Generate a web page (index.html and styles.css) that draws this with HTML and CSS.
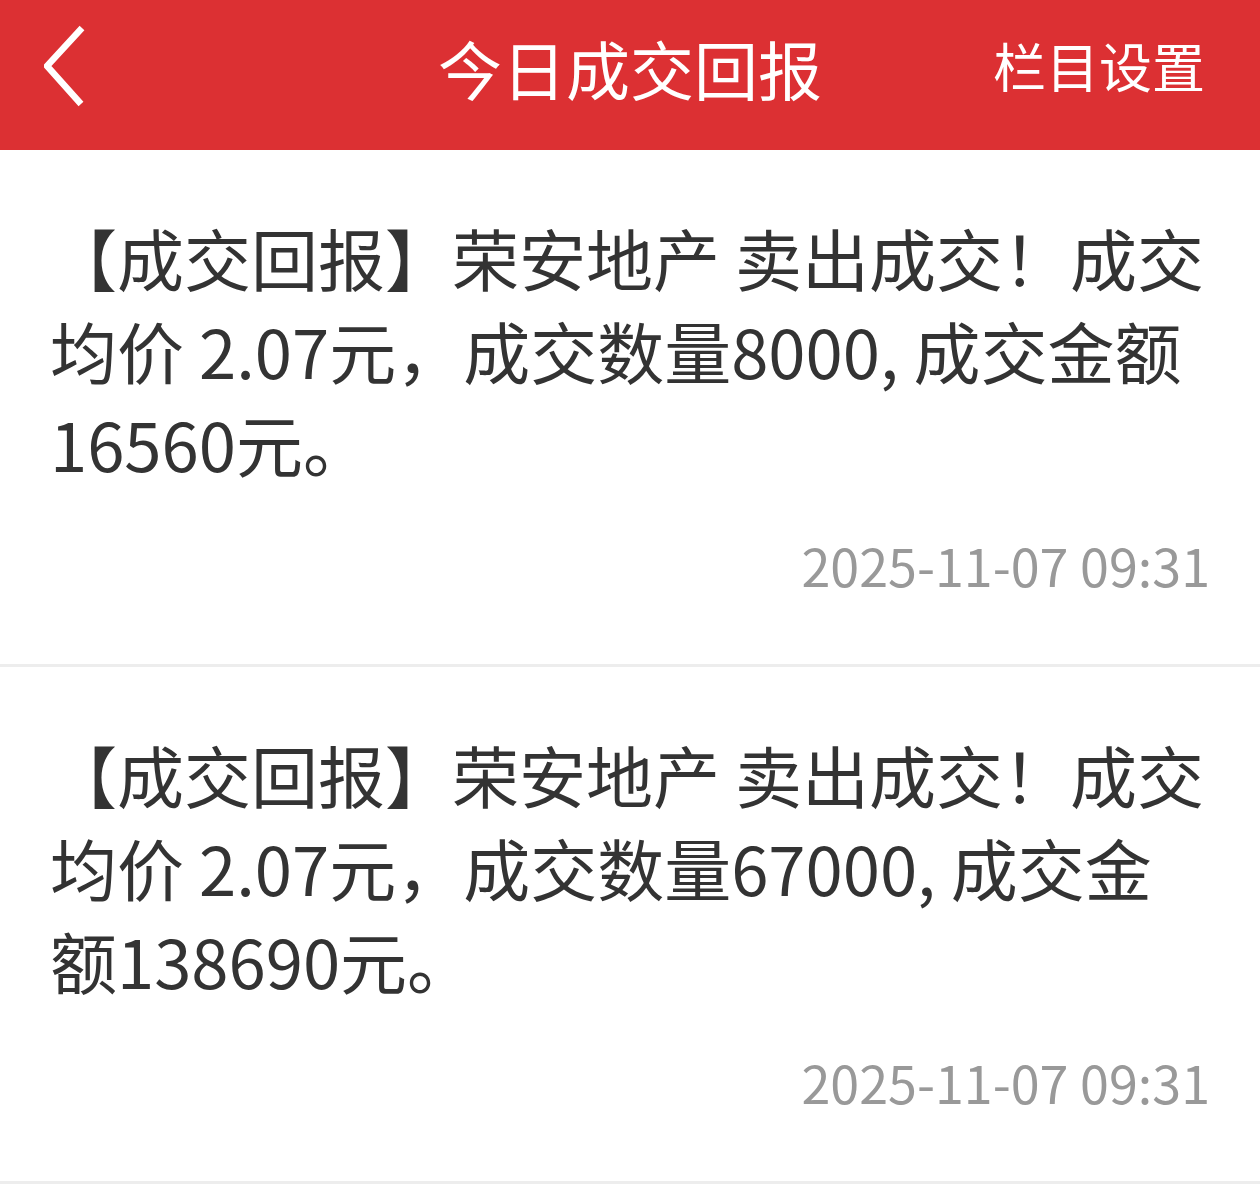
FILE: index.html
```html
<!DOCTYPE html>
<html lang="zh-CN">
<head>
<meta charset="utf-8">
<title>今日成交回报</title>
<link rel="stylesheet" href="styles.css">
</head>
<body>
<header class="topbar">
  <div class="back">
    <svg width="60" height="90" viewBox="0 0 60 90"><polyline points="38,7 3,45 37,83" fill="none" stroke="#fff" stroke-width="6.5" stroke-linecap="butt" stroke-linejoin="miter"/></svg>
  </div>
  <h1 class="title">今日成交回报</h1>
  <div class="action">栏目设置</div>
</header>
<main class="list">
  <article class="item">
    <p class="msg">【成交回报】荣安地产 卖出成交！成交均价 2.07元，成交数量8000, 成交金额16560元。</p>
    <div class="time">2025-11-07 09:31</div>
  </article>
  <article class="item">
    <p class="msg">【成交回报】荣安地产 卖出成交！成交均价 2.07元，成交数量67000, 成交金额138690元。</p>
    <div class="time">2025-11-07 09:31</div>
  </article>
</main>
</body>
</html>
```
FILE: styles.css
```css
* { box-sizing: border-box; }
html, body { margin: 0; padding: 0; background: #fff; }
body {
  width: 1260px;
  font-family: "Noto Sans CJK SC", "Noto Sans", sans-serif;
  color: #333;
}
.topbar {
  height: 150px;
  background: #dc3033;
  display: flex;
  align-items: center;
  position: relative;
  color: #fff;
}
.back {
  align-self: flex-start;
  margin-top: 21px;
  padding-left: 44px;
  display: flex;
}
.title {
  position: absolute;
  left: 0;
  right: 0;
  top: 0;
  height: 150px;
  margin: 0;
  padding-bottom: 16px;
  display: flex;
  align-items: center;
  justify-content: center;
  font-size: 64px;
  font-weight: 400;
  pointer-events: none;
}
.action {
  margin-left: auto;
  padding-right: 55px;
  font-size: 53px;
  position: relative;
  top: -10px;
}
.item {
  padding: 60px 50px 64px 50px;
  border-bottom: 3px solid #ededed;
}
.msg {
  margin: 0;
  font-size: 67px;
  line-height: 93px;
  color: #333;
}
.time {
  margin-top: 41px;
  text-align: right;
  font-size: 52px;
  line-height: 70px;
  color: #999;
}
```
